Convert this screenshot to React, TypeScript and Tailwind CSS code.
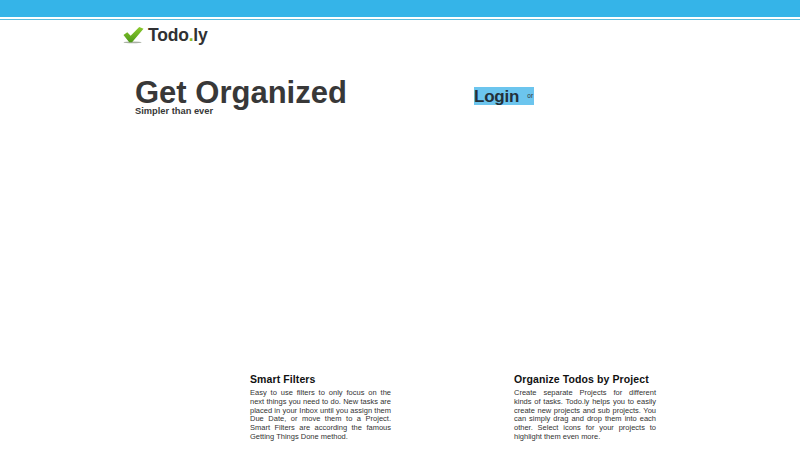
function Feature({ title, children, className }: { title: string; children: string; className: string }) {
  return (
    <section className={className}>
      <h3 className="text-[10.5px] leading-[14px] font-bold tracking-[0.1px] whitespace-nowrap text-[#111]">{title}</h3>
      <p className="mt-[3px] text-justify text-[7.5px] leading-[8.8px] text-[#333]">{children}</p>
    </section>
  );
}

function Logo() {
  return (
    <div className="flex h-[30px] items-center">
      <svg width="21" height="18" viewBox="0 0 22 18" className="mt-[-1px]">
        <defs>
          <linearGradient id="check" x1="0" y1="0" x2="0" y2="1">
            <stop offset="0" stopColor="#8ccb2e" />
            <stop offset="1" stopColor="#4f9a18" />
          </linearGradient>
        </defs>
        <ellipse cx="10" cy="16.8" rx="9.5" ry="0.9" fill="#a9b0a4" />
        <path d="M0.5 9 L4.5 6 L8 9.8 L17 0.5 L21.5 2.5 L9.5 16.5 L6.5 16.5 Z" fill="url(#check)" />
      </svg>
      <span className="mt-[1px] ml-[4px] text-[17.5px] leading-none font-bold tracking-[-0.2px] text-[#2f3133]">
        Todo<span className="text-[#8dbb22]">.</span>ly
      </span>
    </div>
  );
}

export default function App() {
  return (
    <div className="h-[450px] w-[800px] overflow-hidden bg-white font-['Liberation_Sans',Arial,sans-serif]">
      <div className="h-[20px] border-b border-[#5bbcdf] bg-white">
        <div className="h-[17px] bg-[#35b4e8]" />
      </div>

      <div className="pl-[123px]">
        <Logo />
      </div>

      <div className="mt-[29px] flex h-[285px] items-start pl-[135px]">
        <div className="w-[339px]">
          <h1 className="text-[31px] leading-[27px] font-bold text-[#383838]">Get Organized</h1>
          <p className="text-[9.3px] leading-[10px] font-bold text-[#383838]">Simpler than ever</p>
        </div>
        <div className="mt-[8px] flex h-[18px] w-[60px] items-center bg-[#6cc5ee]">
          <span className="text-[17px] leading-none font-bold tracking-[-0.2px] text-[#23303a]">Login</span>
          <span className="ml-[8px] text-[6.5px] leading-none text-[#333]">or</span>
        </div>
      </div>

      <div className="mt-[8px] flex pl-[250px]">
        <Feature title="Smart Filters" className="w-[141px]">
          Easy to use filters to only focus on the next things you need to do. New tasks are placed in your Inbox until you assign them Due Date, or move them to a Project. Smart Filters are according the famous Getting Things Done method.
        </Feature>
        <Feature title="Organize Todos by Project" className="ml-[123px] w-[142px]">
          Create separate Projects for different kinds of tasks. Todo.ly helps you to easily create new projects and sub projects. You can simply drag and drop them into each other. Select icons for your projects to highlight them even more.
        </Feature>
      </div>
    </div>
  );
}
